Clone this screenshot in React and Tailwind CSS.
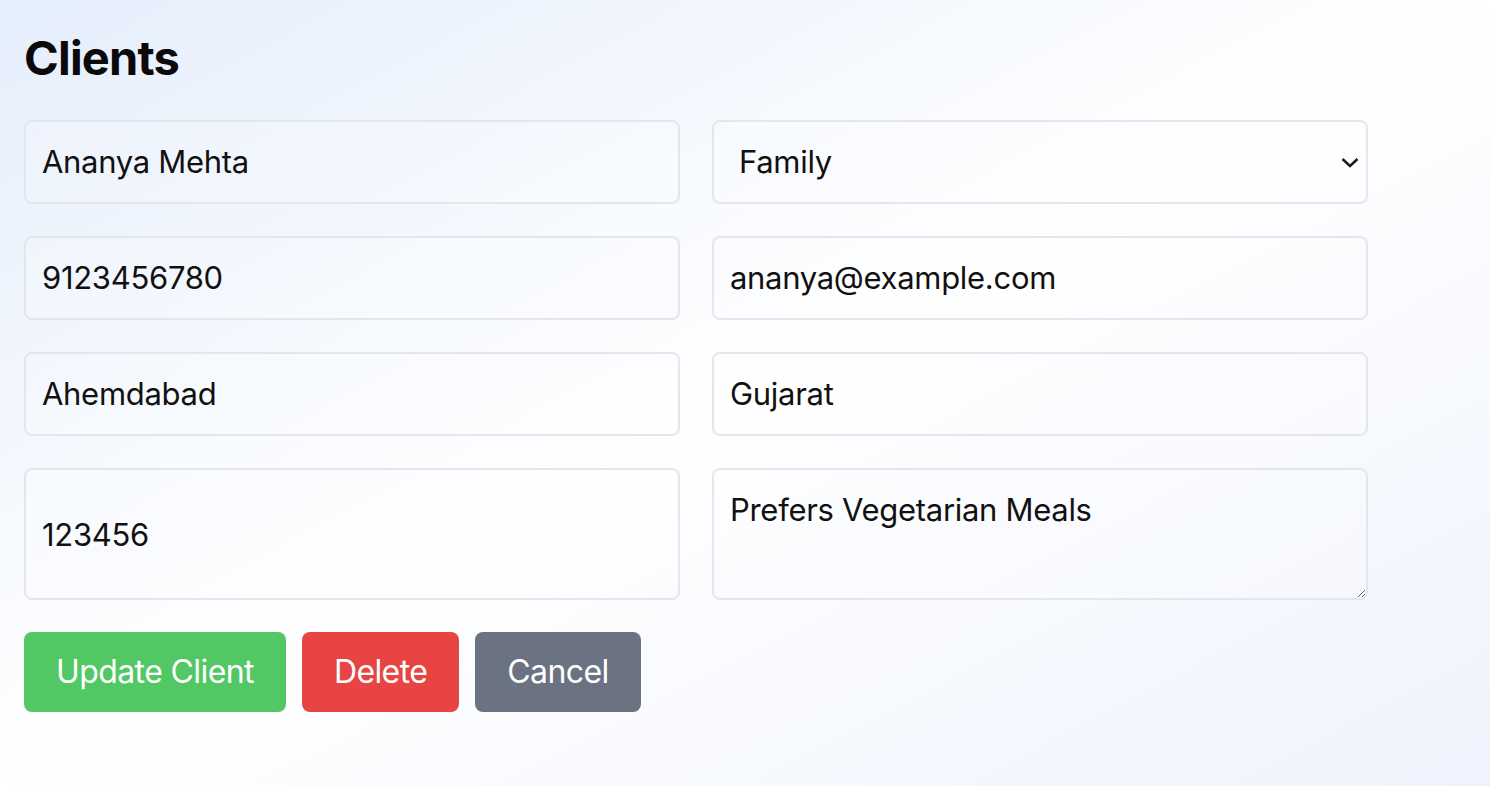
import React from "react";

export default function App() {
  const field =
    "w-full rounded-[8px] border-2 border-[#e4e6ea] bg-white/20 px-4 py-4 text-[31px] leading-[48px] tracking-[-0.3px] text-[#111] outline-none";
  return (
    <div
      className="min-h-screen w-full bg-gradient-to-br from-[#e5eefc] via-white to-[#eef3fd] p-6"
      style={{ fontFamily: "Inter, 'Noto Sans', sans-serif" }}
    >
      <div className="max-w-[1344px]">
        <h1 className="mb-[30px] mt-[2px] text-[47px] font-bold leading-[64px] tracking-[-0.8px] text-[#0a0a0a]">
          Clients
        </h1>
        <div className="grid grid-cols-2 gap-8">
          <input className={field} defaultValue="Ananya Mehta" />
          <div className="relative">
            <select className={field + " appearance-none pl-[25px]"} defaultValue="Family">
              <option>Family</option>
              <option>Individual</option>
              <option>Corporate</option>
            </select>
            <svg
              className="pointer-events-none absolute right-[9px] top-1/2 -translate-y-1/2"
              width="18"
              height="12"
              viewBox="0 0 18 12"
              fill="none"
            >
              <path d="M1.5 3 L9 10 L16.5 3" stroke="#1a1a1a" strokeWidth="2.4" />
            </svg>
          </div>
          <input className={field} defaultValue="9123456780" />
          <input className={field} defaultValue="ananya@example.com" />
          <input className={field} defaultValue="Ahemdabad" />
          <input className={field} defaultValue="Gujarat" />
          <input className={field + " h-[132px]"} defaultValue="123456" />
          <textarea className={field + " h-[132px]"} defaultValue="Prefers Vegetarian Meals" />
        </div>
        <div className="mt-8 flex gap-4">
          <button className="h-20 rounded-[8px] bg-[#51c863] px-8 text-[32px] leading-[48px] tracking-[-0.6px] text-white">
            Update Client
          </button>
          <button className="h-20 rounded-[8px] bg-[#e84444] px-8 text-[32px] leading-[48px] tracking-[-0.6px] text-white">
            Delete
          </button>
          <button className="h-20 rounded-[8px] bg-[#6b7281] px-8 text-[32px] leading-[48px] tracking-[-0.6px] text-white">
            Cancel
          </button>
        </div>
      </div>
    </div>
  );
}
